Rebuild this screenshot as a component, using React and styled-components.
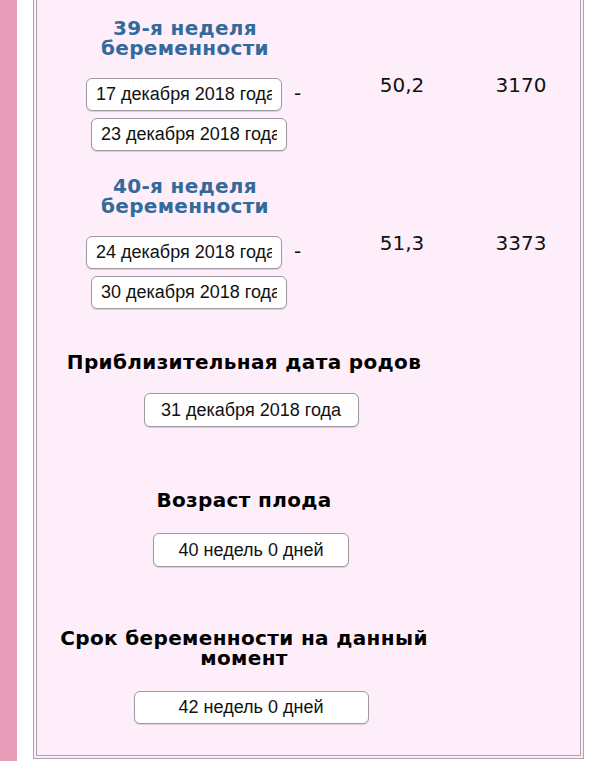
import React from "react";
import styled, { createGlobalStyle } from "styled-components";

const Global = createGlobalStyle`
  html, body { margin: 0; padding: 0; background: #fff; }
  body { min-height: 100vh; font-family: "DejaVu Sans", Verdana, sans-serif; }
  #root { min-height: 100vh; display: flex; }
`;

const Page = styled.div`
  display: flex;
  align-items: stretch;
  min-height: 100vh;
  width: 100%;
`;

const Stripe = styled.div`
  width: 17px;
  flex: none;
  background: #e99db8;
`;

const Spacer = styled.div`
  width: 16px;
  flex: none;
  background: #fff;
`;

const Panel = styled.main`
  box-sizing: border-box;
  width: 551px;
  flex: none;
  align-self: flex-start;
  background: #fdeefa;
  border: 4px double #aba4ab;
  border-top: none;
  padding: 18px 0 31px 0;
  display: flex;
  flex-direction: column;
`;

const WeekGrid = styled.section`
  display: grid;
  grid-template-columns: 296px 138px 100px;
  grid-template-areas:
    "title . ."
    "dates v1 v2";
  row-gap: 20px;
  margin-top: ${(p) => p.$mt || 0}px;
`;

const WeekTitle = styled.h2`
  grid-area: title;
  margin: 0;
  text-align: center;
  font-family: "DejaVu Sans", Verdana, sans-serif;
  font-weight: bold;
  font-size: 20px;
  line-height: 20px;
  letter-spacing: 0.3px;
  color: #336a9a;
`;

const Dates = styled.div`
  grid-area: dates;
  display: flex;
  flex-direction: column;
  align-items: flex-start;
`;

const DateLine = styled.div`
  display: flex;
  align-items: center;
  margin-left: 49px;
`;

const Dash = styled.span`
  margin-left: 12px;
  margin-top: -3px;
  font-size: 20px;
  line-height: 20px;
  color: #111;
`;

const Field = styled.input`
  box-sizing: border-box;
  width: ${(p) => p.$w}px;
  height: ${(p) => p.$h || 33}px;
  margin: 0;
  margin-top: ${(p) => p.$mt || 0}px;
  margin-left: ${(p) => p.$ml || 0}px;
  padding: 0 ${(p) => (p.$center ? 4 : 9)}px;
  border: 1px solid #9f9a9f;
  border-radius: 6px;
  background: #fff;
  box-shadow: 0 1px 1px rgba(0, 0, 0, 0.14);
  font-family: "Liberation Sans", Arial, sans-serif;
  font-size: 18px;
  color: #111;
  text-align: ${(p) => (p.$center ? "center" : "left")};
  outline: none;
`;

const Value = styled.div`
  grid-area: ${(p) => p.$area};
  margin-top: -5px;
  text-align: center;
  font-family: "DejaVu Sans", Verdana, sans-serif;
  font-size: 20px;
  line-height: 24px;
  color: #111;
`;

const Section = styled.section`
  width: 414px;
  display: flex;
  flex-direction: column;
  align-items: center;
  margin-top: ${(p) => p.$mt}px;
`;

const SectionTitle = styled.h3`
  margin: 0 0 ${(p) => p.$gap}px 0;
  text-align: center;
  font-family: "DejaVu Sans", Verdana, sans-serif;
  font-weight: bold;
  font-size: 20px;
  line-height: 20px;
  letter-spacing: 0.35px;
  color: #000;
`;

const weeks = [
  { title: "39-я неделя беременности", from: "17 декабря 2018 года", to: "23 декабря 2018 года", len: "50,2", mass: "3170" },
  { title: "40-я неделя беременности", from: "24 декабря 2018 года", to: "30 декабря 2018 года", len: "51,3", mass: "3373" },
];

const sections = [
  { title: "Приблизительная дата родов", value: "31 декабря 2018 года", w: 215, h: 34, mt: 43, gap: 21 },
  { title: "Возраст плода", value: "40 недель 0 дней", w: 196, h: 34, mt: 63, gap: 23 },
  { title: "Срок беременности на данный момент", value: "42 недель 0 дней", w: 235, h: 33, mt: 61, gap: 23 },
];

export default function App() {
  return (
    <>
      <Global />
      <Page>
        <Stripe />
        <Spacer />
        <Panel>
          {weeks.map((w, i) => (
            <WeekGrid key={w.title} $mt={i ? 25 : 0}>
              <WeekTitle>
                {w.title.split(" ").slice(0, 2).join(" ")}
                <br />
                {w.title.split(" ").slice(2).join(" ")}
              </WeekTitle>
              <Dates>
                <DateLine>
                  <Field readOnly value={w.from} $w={196} />
                  <Dash>-</Dash>
                </DateLine>
                <Field readOnly value={w.to} $w={196} $mt={7} $ml={54} />
              </Dates>
              <Value $area="v1">{w.len}</Value>
              <Value $area="v2">{w.mass}</Value>
            </WeekGrid>
          ))}
          {sections.map((s) => (
            <Section key={s.title} $mt={s.mt}>
              <SectionTitle $gap={s.gap}>{s.title}</SectionTitle>
              <Field readOnly value={s.value} $w={s.w} $h={s.h} $ml={14} $center />
            </Section>
          ))}
        </Panel>
      </Page>
    </>
  );
}
